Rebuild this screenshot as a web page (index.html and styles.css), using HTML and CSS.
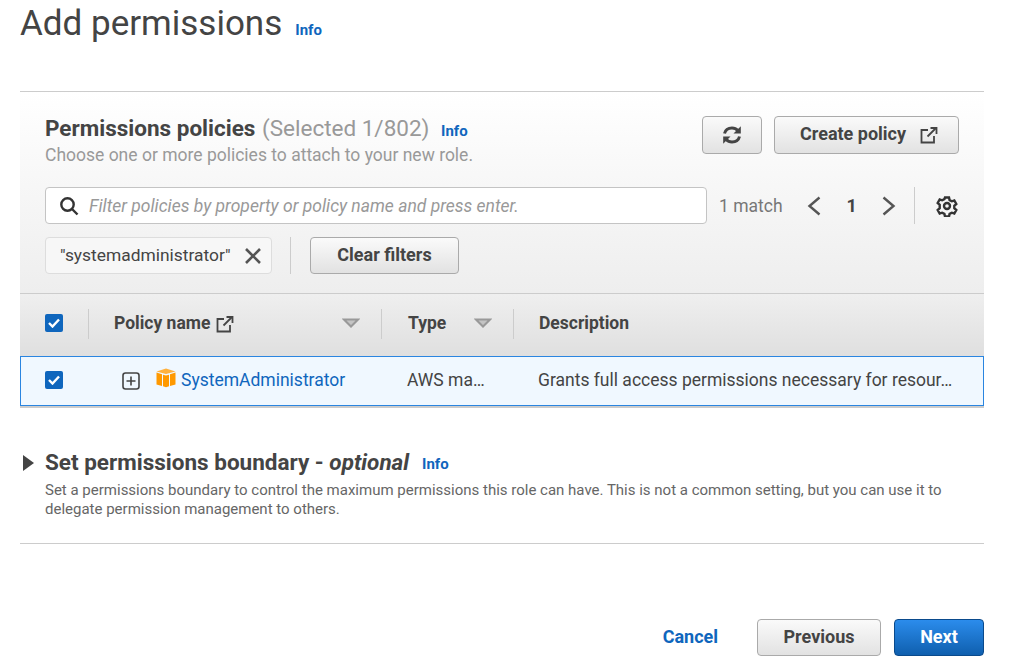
FILE: index.html
```html
<!DOCTYPE html>
<html lang="en">
<head>
    <meta charset="UTF-8">
    <meta name="viewport" content="width=device-width, initial-scale=1.0">
    <title>Add permissions</title>
    <link rel="stylesheet" href="styles.css">
</head>
<body>
    <!-- Page title -->
    <header class="page-head">
        <h1>Add permissions</h1>
        <a href="#" class="info">Info</a>
    </header>

    <!-- Policies panel -->
    <section class="panel">
        <div class="panel-top">
            <div class="panel-title">
                <h2>Permissions policies <span class="count">(Selected 1/802)</span> <a href="#" class="info">Info</a></h2>
                <p>Choose one or more policies to attach to your new role.</p>
            </div>
            <div class="panel-actions">
                <button class="btn btn-refresh">
                    <svg width="20" height="20" viewBox="0 0 20 20" fill="none" stroke="#444" stroke-width="3">
                        <path d="M2.5 8.5C3.5 4.5 6.5 3 10 3c2.6 0 4.4 1 6 2.8"/>
                        <path d="M17.5 11.5C16.5 15.5 13.5 17 10 17c-2.6 0-4.4-1-6-2.8"/>
                        <path d="M18.8 1.2v7.3h-7.3z" fill="#444" stroke="none"/>
                        <path d="M1.2 18.8v-7.3h7.3z" fill="#444" stroke="none"/>
                    </svg>
                </button>
                <button class="btn btn-create">Create policy
                    <svg class="ext" width="18" height="18" viewBox="0 0 18 18" fill="none" stroke="#444" stroke-width="1.8">
                        <path d="M8 4H1.5v12.5H14V10"/>
                        <path d="M7.5 10.5L16 2"/>
                        <path d="M10.5 2H16.5V8"/>
                    </svg>
                </button>
            </div>
        </div>

        <div class="search-row">
            <div class="search-box">
                <svg width="20" height="20" viewBox="0 0 20 20" fill="none" stroke="#333" stroke-width="2.4">
                    <circle cx="8.5" cy="8.5" r="6.2"/>
                    <path d="M13 13l5.5 5.5"/>
                </svg>
                <span>Filter policies by property or policy name and press enter.</span>
            </div>
            <span class="match">1 match</span>
            <svg class="chev" width="14" height="22" viewBox="0 0 14 22" fill="none" stroke="#555" stroke-width="2.4"><path d="M12.5 2.5L2.5 11l10 8.5"/></svg>
            <span class="page-num">1</span>
            <svg class="chev" width="14" height="22" viewBox="0 0 14 22" fill="none" stroke="#555" stroke-width="2.4"><path d="M1.5 2.5l10 8.5-10 8.5"/></svg>
            <span class="vline"></span>
            <svg class="gear" width="22" height="22" viewBox="0 0 22 22" fill="none" stroke="#333" stroke-width="2.4">
                <path d="M9 2.5h4l.6 2.6 2.2 1.2 2.5-.8 2 3.5-2 1.8v2.4l2 1.8-2 3.5-2.5-.8-2.2 1.2-.6 2.6H9l-.6-2.6-2.2-1.2-2.5.8-2-3.5 2-1.8V9.8l-2-1.8 2-3.5 2.5.8 2.2-1.2z"/>
                <circle cx="11" cy="11" r="3"/>
            </svg>
        </div>

        <div class="filter-row">
            <div class="token">"systemadministrator"
                <svg width="18" height="18" viewBox="0 0 18 18" stroke="#555" stroke-width="2.6"><path d="M2 2l14 14M16 2L2 16"/></svg>
            </div>
            <span class="vline tall"></span>
            <button class="btn btn-clear">Clear filters</button>
        </div>

        <!-- Table -->
        <div class="table-head">
            <div class="col-check"><span class="checkbox"><svg width="12" height="10" viewBox="0 0 12 10" fill="none" stroke="#fff" stroke-width="2.4"><path d="M1 5l3.5 3.5L11 1.5"/></svg></span></div>
            <div class="col-name th">Policy name
                <svg class="ext" width="18" height="18" viewBox="0 0 18 18" fill="none" stroke="#444" stroke-width="1.8">
                    <path d="M8 4H1.5v12.5H14V10"/>
                    <path d="M7.5 10.5L16 2"/>
                    <path d="M10.5 2H16.5V8"/>
                </svg>
                <svg class="sort" width="18" height="10" viewBox="0 0 18 10" fill="#c4c4c4" stroke="#999" stroke-width="2"><path d="M2 1.5h14L9 8.5z"/></svg>
            </div>
            <div class="col-type th">Type<svg class="sort" width="18" height="10" viewBox="0 0 18 10" fill="#c4c4c4" stroke="#999" stroke-width="2"><path d="M2 1.5h14L9 8.5z"/></svg></div>
            <div class="col-desc th">Description</div>
        </div>
        <div class="table-row">
            <div class="col-check"><span class="checkbox"><svg width="12" height="10" viewBox="0 0 12 10" fill="none" stroke="#fff" stroke-width="2.4"><path d="M1 5l3.5 3.5L11 1.5"/></svg></span></div>
            <div class="cell-name">
                <svg class="expand" width="18" height="18" viewBox="0 0 18 18" fill="none" stroke="#444" stroke-width="1.6">
                    <rect x="1" y="1" width="16" height="16" rx="2.5"/>
                    <path d="M9 4.5v9M4.5 9h9"/>
                </svg>
                <svg class="cube" width="20" height="20" viewBox="0 0 20 20">
                    <path d="M10 .5l9.5 3-9.5 2.6L.5 3.5z" fill="#ffb13d"/>
                    <path d="M.5 4.6l5.5 1.7V18L.5 16.4z" fill="#ff9900"/>
                    <path d="M19.5 4.6L14 6.3V18l5.5-1.6z" fill="#ff9900"/>
                    <path d="M7 6.7l3 .8 3-.8v11.6l-3 .9-3-.9z" fill="#ff9900"/>
                </svg>
                <a href="#">SystemAdministrator</a>
            </div>
            <div class="cell-type">AWS ma…</div>
            <div class="cell-desc">Grants full access permissions necessary for resour…</div>
        </div>
    </section>

    <!-- Boundary section -->
    <section class="boundary">
        <h2><span class="caret"></span>Set permissions boundary - <em>optional</em> <a href="#" class="info">Info</a></h2>
        <p>Set a permissions boundary to control the maximum permissions this role can have. This is not a common setting, but you can use it to delegate permission management to others.</p>
    </section>

    <!-- Footer buttons -->
    <footer class="actions">
        <a href="#" class="cancel">Cancel</a>
        <button class="btn btn-prev">Previous</button>
        <button class="btn btn-next">Next</button>
    </footer>
</body>
</html>
```

FILE: styles.css
```css
html, body {
    height: 666px;
    overflow: hidden;
}

body {
    font-family: Roboto, "Liberation Sans", sans-serif;
    background-color: #fff;
    color: #444;
    margin: 0;
    padding: 0 32px 0 20px;
}

a {
    text-decoration: none;
}

.info {
    color: #0f66bd;
    font-size: 15px;
    font-weight: 700;
}

/* Page title */
.page-head {
    display: flex;
    align-items: center;
    gap: 13px;
    height: 91px;
    padding-bottom: 44px;
    box-sizing: border-box;
}

.page-head h1 {
    font-size: 35px;
    font-weight: 400;
    line-height: 47px;
    margin: 0;
    color: #444;
}

.page-head .info {
    margin-top: 12px;
}

/* Panel */
.panel {
    border-top: 1px solid #ccc;
    background: linear-gradient(#fff, #eee 200px);
}

.panel-top {
    display: flex;
    justify-content: space-between;
    padding: 23px 25px 0;
    height: 71px;
    box-sizing: border-box;
}

.panel-title h2 {
    font-size: 22.5px;
    font-weight: 700;
    line-height: 26px;
    margin: 0;
    color: #444;
}

.panel-title .count {
    font-weight: 400;
    color: #999;
    margin-left: 1px;
}

.panel-title .info {
    margin-left: 6px;
}

.panel-title p {
    font-size: 17.5px;
    line-height: 24px;
    margin: -1px 0 0;
    color: #999;
}

.btn {
    font-family: inherit;
    font-size: 18px;
    font-weight: 700;
    color: #444;
    border: 1px solid #aaa;
    border-radius: 4px;
    background: linear-gradient(#fafafa, #e2e2e2);
    display: inline-flex;
    align-items: center;
    justify-content: center;
    padding: 0 0 2px;
    box-sizing: border-box;
}

.panel-actions {
    display: flex;
    gap: 12px;
    margin-top: 1px;
}

.btn-refresh {
    width: 60px;
    height: 38px;
    padding: 0;
}

.btn-create {
    width: 185px;
    height: 38px;
    gap: 14px;
    padding: 0 0 4px 5px;
}

.btn-create .ext {
    margin-top: 4px;
}

/* Search row */
.search-row {
    display: flex;
    align-items: center;
    padding: 24px 25px 0;
}

.search-box {
    width: 662px;
    height: 37px;
    box-sizing: border-box;
    background: #fff;
    border: 1px solid #c4c4c4;
    border-radius: 4px;
    display: flex;
    align-items: center;
    gap: 10px;
    padding-left: 13px;
    font-size: 17.5px;
    font-style: italic;
    color: #999;
}

.match {
    font-size: 17.5px;
    color: #777;
    margin-left: 12px;
}

.chev {
    margin-left: 24px;
}

.page-num {
    font-size: 18px;
    font-weight: 700;
    margin-left: 26px;
}

.chev + .page-num + .chev {
    margin-left: 25px;
}

.vline {
    width: 1px;
    height: 37px;
    background: #ccc;
    margin-left: 18px;
}

.gear {
    margin-left: 21px;
}

/* Filter token row */
.filter-row {
    display: flex;
    align-items: center;
    padding: 13px 25px 19px;
}

.token {
    width: 227px;
    height: 37px;
    box-sizing: border-box;
    background: #f7f7f7;
    border: 1px solid #ddd;
    border-radius: 4px;
    display: flex;
    align-items: center;
    justify-content: space-between;
    padding: 0 9px 2px 14px;
    font-size: 17.4px;
    color: #444;
}

.token svg {
    margin-top: 2px;
}

.vline.tall {
    margin-left: 18px;
}

.btn-clear {
    width: 149px;
    height: 37px;
    margin-left: 19px;
}

/* Table */
.table-head {
    display: flex;
    align-items: center;
    height: 63px;
    padding-bottom: 2px;
    box-sizing: border-box;
    border-top: 1px solid #ccc;
    background: linear-gradient(#efefef, #dfdfdf);
}

.col-check {
    width: 68px;
    padding-left: 25px;
    box-sizing: border-box;
    display: flex;
    align-items: center;
    flex: none;
}

.table-head .col-check {
    margin-bottom: 2px;
}

.checkbox {
    width: 18px;
    height: 18px;
    background: #0f66bd;
    border-radius: 2px;
    display: flex;
    align-items: center;
    justify-content: center;
}

.th {
    font-size: 17.5px;
    font-weight: 700;
    height: 30px;
    padding-bottom: 2px;
    display: flex;
    align-items: center;
    box-sizing: border-box;
    border-left: 1px solid #ccc;
}

.col-name {
    width: 293px;
    padding-left: 25px;
    gap: 6px;
}

.col-name .ext {
    margin-top: 2px;
}

.col-name .sort {
    margin-left: auto;
    margin-right: 21px;
}

.col-type {
    width: 132px;
    padding-left: 26px;
}

.col-type .sort {
    margin-left: 28px;
}

.col-desc {
    padding-left: 25px;
}

.table-row {
    display: flex;
    align-items: center;
    height: 50px;
    padding-bottom: 2px;
    background: #f0f8ff;
    border: 1px solid #2a85e0;
    box-sizing: border-box;
    font-size: 17.5px;
    margin-bottom: 1px;
    box-shadow: 0 2px 0 #ccc;
}

.table-row .col-check {
    width: 67px;
    padding-left: 24px;
}

.cell-name {
    width: 319px;
    display: flex;
    align-items: center;
    padding-left: 34px;
    box-sizing: border-box;
    flex: none;
}

.expand {
    margin-top: 2px;
}

.cube {
    margin: -5px 5px 0 16px;
}

.cell-name a {
    color: #0f66bd;
}

.cell-type {
    width: 131px;
    flex: none;
}

/* Boundary */
.boundary {
    margin-top: 42px;
    height: 96px;
    border-bottom: 1px solid #ccc;
}

.boundary h2 {
    font-size: 22.5px;
    font-weight: 700;
    line-height: 26px;
    margin: -1px 0 4px;
    display: flex;
    align-items: center;
    white-space: pre;
}

.caret {
    width: 0;
    height: 0;
    border-top: 8px solid transparent;
    border-bottom: 8px solid transparent;
    border-left: 11px solid #444;
    margin: 2px 11px 0 3px;
}

.boundary .info {
    margin: 4px 0 0 13px;
}

.boundary p {
    font-size: 15px;
    line-height: 19px;
    margin: 0 0 0 25px;
    color: #666;
}

/* Footer */
.actions {
    display: flex;
    justify-content: flex-end;
    align-items: center;
    margin-top: 75px;
}

.cancel {
    color: #0f66bd;
    font-size: 18px;
    font-weight: 700;
    margin: 0 39px 2px 0;
}

.btn-prev {
    width: 124px;
    height: 37px;
}

.btn-next {
    width: 90px;
    height: 37px;
    margin-left: 13px;
    color: #fff;
    border-color: #0a4a8c;
    background: linear-gradient(#2b8cec, #0f5fae);
}
```
